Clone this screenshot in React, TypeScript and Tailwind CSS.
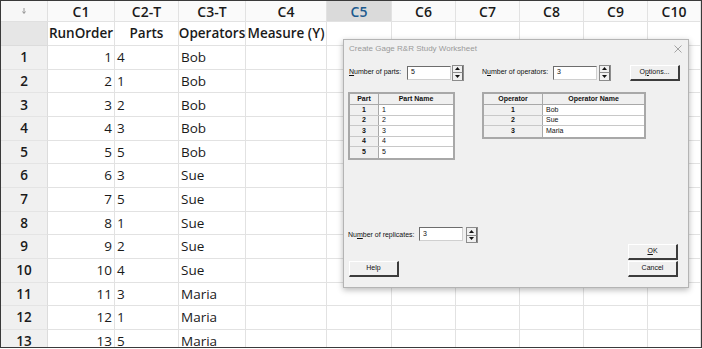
import React from "react";

const COLS = [
  { w: "w-[67px]", h: "C1", n: "RunOrder" },
  { w: "w-[64px]", h: "C2-T", n: "Parts" },
  { w: "w-[67px]", h: "C3-T", n: "Operators" },
  { w: "w-[81px]", h: "C4", n: "Measure (Y)" },
  { w: "w-[65px]", h: "C5", n: "" },
  { w: "w-[64px]", h: "C6", n: "" },
  { w: "w-[64px]", h: "C7", n: "" },
  { w: "w-[64px]", h: "C8", n: "" },
  { w: "w-[64px]", h: "C9", n: "" },
  { w: "w-[53px]", h: "C10", n: "" },
];

const DATA: [number, string, string][] = [
  [1, "4", "Bob"],
  [2, "1", "Bob"],
  [3, "2", "Bob"],
  [4, "3", "Bob"],
  [5, "5", "Bob"],
  [6, "3", "Sue"],
  [7, "5", "Sue"],
  [8, "1", "Sue"],
  [9, "2", "Sue"],
  [10, "4", "Sue"],
  [11, "3", "Maria"],
  [12, "1", "Maria"],
  [13, "5", "Maria"],
];

const sheetFont = { fontFamily: '"Open Sans", "Noto Sans", sans-serif' };
const dlgFont = { fontFamily: '"Liberation Sans", Arial, sans-serif' };

function Spin() {
  return (
    <div className="w-[12px] h-[16px] flex flex-col border border-[#8c8c8c] bg-[#f0f0f0]">
      <div className="flex-1 flex items-center justify-center border-b border-b-[#8c8c8c] border-r border-r-[#6a6a6a]">
        <svg width="5" height="3" viewBox="0 0 5 3">
          <path d="M2.5 0 L5 3 L0 3 Z" fill="#111" />
        </svg>
      </div>
      <div className="flex-1 flex items-center justify-center border-r border-r-[#6a6a6a]">
        <svg width="5" height="3" viewBox="0 0 5 3">
          <path d="M0 0 L5 0 L2.5 3 Z" fill="#111" />
        </svg>
      </div>
    </div>
  );
}

function Input({ w, v }: { w: string; v: string }) {
  return (
    <div
      className={`${w} h-[14px] bg-white border border-t-[#6d6d6d] border-l-[#6d6d6d] border-r-[#d0d0d0] border-b-[#d0d0d0] flex items-center pl-[3px] text-[7px] text-[#111]`}
    >
      {v}
    </div>
  );
}

function Btn({ children, w }: { children: React.ReactNode; w: string }) {
  return (
    <div
      className={`${w} h-[16px] bg-[#f0f0f0] border-t border-l border-t-[#ffffff] border-l-[#ffffff] border-b-2 border-r-2 border-b-[#3c3c3c] border-r-[#3c3c3c] flex items-center justify-center text-[7px] text-[#111]`}
    >
      {children}
    </div>
  );
}

function SmallTable({
  c1,
  c2,
  c1w,
  c2w,
  rows,
}: {
  c1: string;
  c2: string;
  c1w: string;
  c2w: string;
  rows: [string, string][];
}) {
  return (
    <div className="border-2 border-[#a8a8a8] bg-white flex flex-col text-[7px] text-[#111]">
      <div className="flex h-[11px] bg-[#f0f0f0] border-b border-[#a8a8a8] font-bold">
        <div className={`${c1w} flex items-center justify-center border-r border-[#a8a8a8]`}>{c1}</div>
        <div className={`${c2w} flex items-center justify-center`}>{c2}</div>
      </div>
      {rows.map(([a, b], i) => (
        <div key={i} className={`flex h-[10.5px] ${i < rows.length - 1 ? "border-b border-[#c8c8c8]" : ""}`}>
          <div className={`${c1w} flex items-center justify-center bg-[#f0f0f0] border-r border-[#a8a8a8] font-bold`}>{a}</div>
          <div className={`${c2w} flex items-center pl-[3px] bg-white`}>{b}</div>
        </div>
      ))}
    </div>
  );
}

function Dialog() {
  return (
    <div
      className="absolute left-[343px] top-[39px] w-[346px] h-[249px] bg-[#f0f0f0] border border-[#b4b4b4] shadow-[0_2px_6px_rgba(0,0,0,0.28)] flex flex-col"
      style={dlgFont}
    >
      <div className="h-[18px] flex items-center justify-between pl-[5px] pr-[6px]">
        <span className="text-[8px] text-[#9a9a9a]">Create Gage R&amp;R Study Worksheet</span>
        <svg width="8" height="8" viewBox="0 0 8 8">
          <path d="M0.5 0.5 L7.5 7.5 M7.5 0.5 L0.5 7.5" stroke="#9a9a9a" strokeWidth="0.9" />
        </svg>
      </div>
      <div className="mt-[6px] h-[17px] flex items-center pl-[5px]">
        <span className="text-[7px] text-[#111] w-[58px]">
          <u>N</u>umber of parts:
        </span>
        <Input w="w-[44px]" v="5" />
        <div className="ml-[1px]">
          <Spin />
        </div>
        <span className="ml-[18px] text-[7px] text-[#111] w-[71px]">
          N<u>u</u>mber of operators:
        </span>
        <Input w="w-[44px]" v="3" />
        <div className="ml-[2px]">
          <Spin />
        </div>
        <div className="ml-[19px]">
          <Btn w="w-[50px]">
            O<u>p</u>tions...
          </Btn>
        </div>
      </div>
      <div className="mt-[11px] flex items-start pl-[4px] gap-[27px]">
        <SmallTable
          c1="Part"
          c2="Part Name"
          c1w="w-[29px]"
          c2w="w-[74px]"
          rows={[
            ["1", "1"],
            ["2", "2"],
            ["3", "3"],
            ["4", "4"],
            ["5", "5"],
          ]}
        />
        <SmallTable
          c1="Operator"
          c2="Operator Name"
          c1w="w-[59px]"
          c2w="w-[101px]"
          rows={[
            ["1", "Bob"],
            ["2", "Sue"],
            ["3", "Maria"],
          ]}
        />
      </div>
      <div className="flex-1" />
      <div className="flex items-end justify-between pl-[4px] pr-[10px] pb-[10px]">
        <div className="flex flex-col">
          <div className="flex items-start">
            <span className="text-[7px] text-[#111] w-[71px] mt-[3px]">
              Nu<u>m</u>ber of replicates:
            </span>
            <Input w="w-[44px]" v="3" />
            <div className="ml-[3px]">
              <Spin />
            </div>
          </div>
          <div className="mt-[18px] ml-[1px]">
            <Btn w="w-[50px]">Help</Btn>
          </div>
        </div>
        <div className="flex flex-col gap-[1px]">
          <Btn w="w-[50px]">
            <u>O</u>K
          </Btn>
          <Btn w="w-[50px]">Cancel</Btn>
        </div>
      </div>
    </div>
  );
}

export default function App() {
  return (
    <div className="w-[702px] h-[349px] bg-white relative overflow-hidden">
      <div className="w-[702px] h-[348px] border border-[#3a3a3a] overflow-hidden text-[#1a1a1a]" style={sheetFont}>
        {/* column header row */}
        <div className="flex h-[21px]">
          <div className="w-[47px] shrink-0 flex items-center justify-center bg-[#f7f7f7] border-r border-b border-[#e0e0e0]">
            <svg width="4" height="6" viewBox="0 0 4 6">
              <path d="M2 0 L2 5 M0.5 3.5 L2 5.5 L3.5 3.5" stroke="#8a8a8a" strokeWidth="0.9" fill="none" />
            </svg>
          </div>
          {COLS.map((c) => (
            <div
              key={c.h}
              className={`${c.w} shrink-0 flex items-center justify-center border-r border-b border-[#e2e2e2] text-[14px] font-semibold ${
                c.h === "C5" ? "bg-[#dadada] text-[#1d5b8f]" : "bg-[#fafafa]"
              }`}
            >
              {c.h}
            </div>
          ))}
        </div>
        {/* names row */}
        <div className="flex h-[24px]">
          <div className="w-[47px] shrink-0 bg-[#e6e6e6] border-r border-b border-[#dcdcdc]" />
          {COLS.map((c) => (
            <div
              key={c.h}
              className={`${c.w} shrink-0 flex items-center justify-center border-r border-b border-[#e2e2e2] text-[13.5px] font-semibold bg-white whitespace-nowrap`}
            >
              {c.n}
            </div>
          ))}
        </div>
        {DATA.map(([n, p, o]) => (
          <div key={n} className="flex h-[23.67px]">
            <div className="w-[47px] shrink-0 flex items-center justify-center bg-[#f0f0f0] border-r border-b border-r-[#dcdcdc] border-b-[#e4e4e4] text-[13.5px] font-semibold">
              {n}
            </div>
            {COLS.map((c, i) => (
              <div
                key={c.h}
                className={`${c.w} shrink-0 flex items-center border-r border-b border-[#e2e2e2] text-[13.5px] bg-white ${
                  i === 0 ? "justify-end pr-[2px]" : "justify-start pl-[2px]"
                }`}
              >
                {i === 0 ? n : i === 1 ? p : i === 2 ? o : ""}
              </div>
            ))}
          </div>
        ))}
      </div>
      <Dialog />
    </div>
  );
}
